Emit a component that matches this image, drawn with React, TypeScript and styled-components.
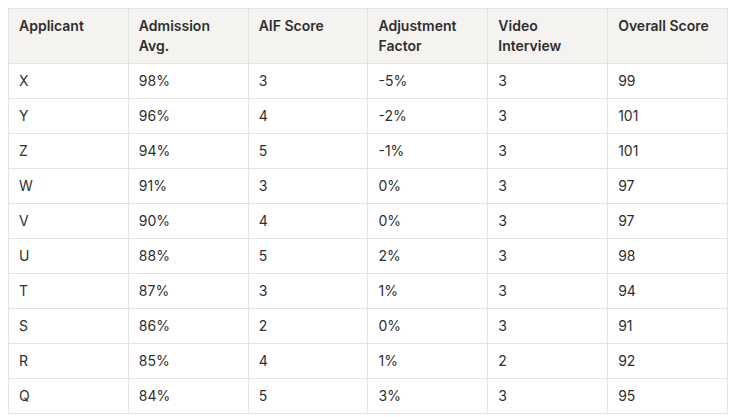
import React from "react";
import styled, { createGlobalStyle } from "styled-components";

const Global = createGlobalStyle`
  html, body { margin: 0; padding: 0; background: #ffffff; }
  body { font-family: Inter, "Noto Sans", sans-serif; }
`;

const Page = styled.div`
  padding: 8px;
`;

const Table = styled.table`
  width: 720px;
  border-collapse: collapse;
  table-layout: fixed;
  font-size: 14px;
  line-height: 20px;
  color: #2f2f2f;
`;

const HeadCell = styled.th`
  background: #f4f3f0;
  border: 1px solid #e4e3e1;
  text-align: left;
  vertical-align: top;
  font-weight: 600;
  padding: 7px 10px 7px 10px;
  height: 40px;
`;

const Cell = styled.td`
  border: 1px solid #e4e3e1;
  padding: 7px 10px;
  height: 20px;
  font-weight: 400;
`;

const headers = [
  "Applicant",
  "Admission Avg.",
  "AIF Score",
  "Adjustment Factor",
  "Video Interview",
  "Overall Score",
];

const rows: string[][] = [
  ["X", "98%", "3", "-5%", "3", "99"],
  ["Y", "96%", "4", "-2%", "3", "101"],
  ["Z", "94%", "5", "-1%", "3", "101"],
  ["W", "91%", "3", "0%", "3", "97"],
  ["V", "90%", "4", "0%", "3", "97"],
  ["U", "88%", "5", "2%", "3", "98"],
  ["T", "87%", "3", "1%", "3", "94"],
  ["S", "86%", "2", "0%", "3", "91"],
  ["R", "85%", "4", "1%", "2", "92"],
  ["Q", "84%", "5", "3%", "3", "95"],
];

export default function App() {
  return (
    <Page>
      <Global />
      <Table>
        <thead>
          <tr>
            {headers.map((h) => (
              <HeadCell key={h}>{h}</HeadCell>
            ))}
          </tr>
        </thead>
        <tbody>
          {rows.map((r) => (
            <tr key={r[0]}>
              {r.map((c, i) => (
                <Cell key={i}>{c}</Cell>
              ))}
            </tr>
          ))}
        </tbody>
      </Table>
    </Page>
  );
}
